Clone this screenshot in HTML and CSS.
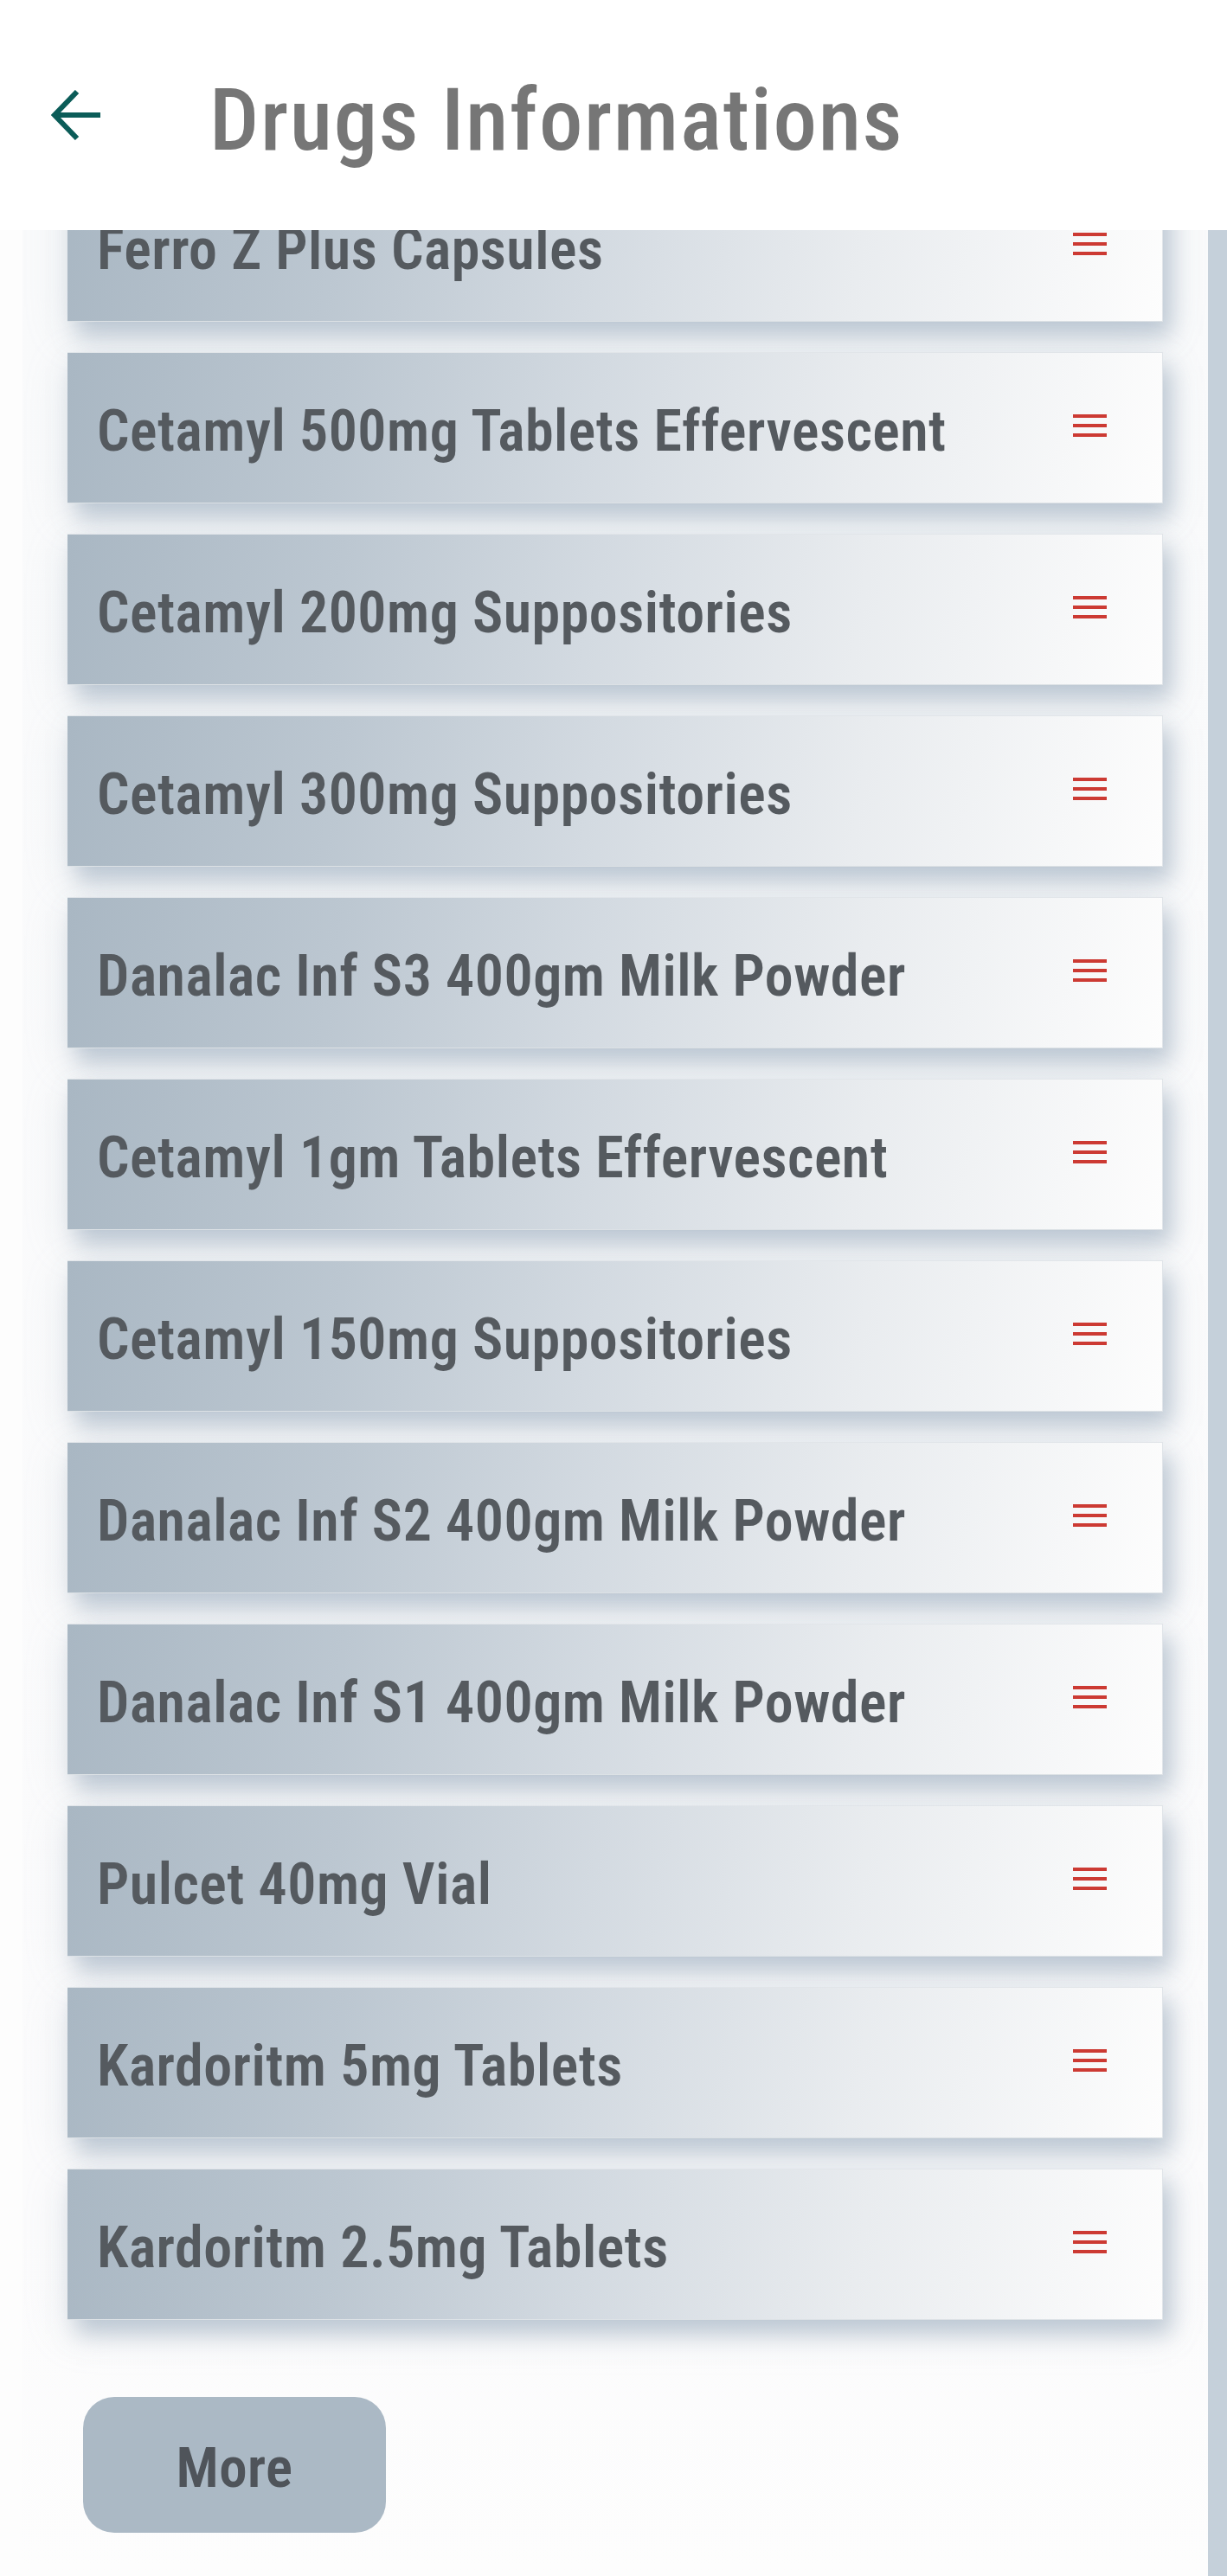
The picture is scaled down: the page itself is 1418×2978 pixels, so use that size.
FILE: index.html
```html
<!DOCTYPE html>
<html lang="en">
<head>
<meta charset="utf-8">
<title>Drugs Informations</title>
<link rel="stylesheet" href="styles.css">
</head>
<body>
<div class="app">
  <header class="topbar">
    <button class="back" aria-label="Back">
      <svg width="58" height="58" viewBox="0 0 58 58" aria-hidden="true">
        <path d="M30 2 L4 29 L30 56 M4 29 H57" fill="none" stroke="#0b5c58" stroke-width="6" stroke-linejoin="miter"/>
      </svg>
    </button>
    <h1 class="title">Drugs Informations</h1>
  </header>
  <main class="viewport">
    <div class="scroller">
      <ul class="list">
        <li class="card"><span class="name">Ferro Z Plus Capsules</span><span class="menu"><i></i><i></i><i></i></span></li>
        <li class="card"><span class="name">Cetamyl 500mg Tablets Effervescent</span><span class="menu"><i></i><i></i><i></i></span></li>
        <li class="card"><span class="name">Cetamyl 200mg Suppositories</span><span class="menu"><i></i><i></i><i></i></span></li>
        <li class="card"><span class="name">Cetamyl 300mg Suppositories</span><span class="menu"><i></i><i></i><i></i></span></li>
        <li class="card"><span class="name">Danalac Inf S3 400gm Milk Powder</span><span class="menu"><i></i><i></i><i></i></span></li>
        <li class="card"><span class="name">Cetamyl 1gm Tablets Effervescent</span><span class="menu"><i></i><i></i><i></i></span></li>
        <li class="card"><span class="name">Cetamyl 150mg Suppositories</span><span class="menu"><i></i><i></i><i></i></span></li>
        <li class="card"><span class="name">Danalac Inf S2 400gm Milk Powder</span><span class="menu"><i></i><i></i><i></i></span></li>
        <li class="card"><span class="name">Danalac Inf S1 400gm Milk Powder</span><span class="menu"><i></i><i></i><i></i></span></li>
        <li class="card"><span class="name">Pulcet 40mg Vial</span><span class="menu"><i></i><i></i><i></i></span></li>
        <li class="card"><span class="name">Kardoritm 5mg Tablets</span><span class="menu"><i></i><i></i><i></i></span></li>
        <li class="card"><span class="name">Kardoritm 2.5mg Tablets</span><span class="menu"><i></i><i></i><i></i></span></li>
      </ul>
      <div class="more-wrap"><button class="more">More</button></div>
    </div>
    <div class="scrollbar"></div>
  </main>
</div>
</body>
</html>
```
FILE: styles.css
```css
html, body {
  margin: 0;
  padding: 0;
  background: #ffffff;
}
body {
  font-family: "Roboto", "Open Sans", sans-serif;
  font-stretch: 75%;
  width: 1418px;
  height: 2978px;
  overflow: hidden;
}
.app {
  width: 1418px;
  height: 2978px;
  display: flex;
  flex-direction: column;
  background: #fdfdfd;
}
.topbar {
  position: relative;
  z-index: 2;
  height: 266px;
  flex: 0 0 266px;
  background: #ffffff;
  display: flex;
  align-items: center;
  padding-left: 59px;
  box-sizing: border-box;
}
.back {
  border: 0;
  background: none;
  padding: 0;
  width: 58px;
  height: 58px;
  display: flex;
}
.title {
  margin: 0 0 0 125px;
  font-family: "Roboto", "Open Sans", sans-serif;
  font-stretch: 75%;
  font-weight: 500;
  font-size: 101px;
  letter-spacing: 1.6px;
  color: #767676;
  line-height: 1;
  padding-top: 11px;
}
.viewport {
  flex: 1;
  display: flex;
  overflow: hidden;
  margin-left: 26px;
  background: linear-gradient(180deg, #f9fafb 0%, #fbfbfc 85%, #fdfdfd 100%);
}
.scroller {
  flex: 1;
  margin-top: -69px;
}
.scrollbar {
  flex: 0 0 22px;
  background: #c5d0da;
}
.list {
  list-style: none;
  margin: 0;
  padding: 0 0 0 52px;
  width: 1266px;
  display: flex;
  flex-direction: column;
  gap: 35px;
}
.card {
  height: 175px;
  box-sizing: border-box;
  display: flex;
  align-items: center;
  padding-left: 34px;
  padding-right: 64px;
  background: linear-gradient(100deg, #a9b7c3 0%, #bcc7d1 25%, #d3dae1 48%, #e9ecef 72%, #fdfdfd 100%);
  border-top: 1px solid #e1e5e9;
  border-right: 1px solid #e1e5e9;
  border-bottom: 1px solid #dde2e6;
  box-shadow: 10px 16px 24px rgba(150, 168, 186, 0.55), 0 14px 48px rgba(160, 176, 192, 0.2);
}
.name {
  flex: 1;
  font-weight: 600;
  font-size: 66px;
  letter-spacing: 0.5px;
  color: #555a5f;
  line-height: 1;
  padding-top: 9px;
  white-space: nowrap;
}
.menu {
  width: 39px;
  display: flex;
  flex-direction: column;
  gap: 7px;
  margin-bottom: 6px;
}
.menu i {
  display: block;
  height: 4px;
  background: #cc3a33;
}
.more-wrap {
  padding: 89px 0 0 70px;
}
.more {
  width: 350px;
  height: 157px;
  border: 0;
  border-radius: 36px;
  background: #abb9c5;
  color: #4f545a;
  font-family: "Roboto", "Open Sans", sans-serif;
  font-stretch: 75%;
  font-weight: 600;
  font-size: 65px;
  letter-spacing: 0.5px;
  line-height: 1;
  padding: 8px 0 0 0;
}
```
